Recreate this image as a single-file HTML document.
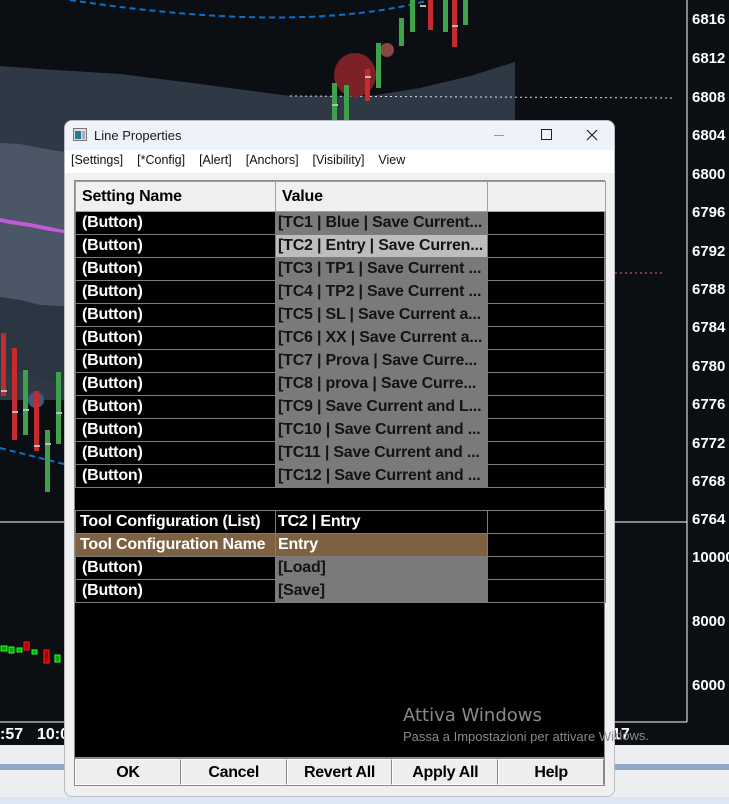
<!DOCTYPE html>
<html><head><meta charset="utf-8"><style>
*{margin:0;padding:0;box-sizing:border-box}
body{width:729px;height:804px;overflow:hidden;background:#0b0e13;position:relative;font-family:"Liberation Sans",Arial,sans-serif}
.abs{position:absolute}
.lbl{position:absolute;left:692px;color:#fff;font-weight:bold;font-size:15px;white-space:nowrap}
.dlg{position:absolute;left:64px;top:120px;width:551px;height:677px;background:#f0f0f0;border-radius:8px;border:1px solid #b9bcc2;overflow:hidden}
.title{height:29px;background:#eef2f9;position:relative;font-size:13px;color:#1a1a1a}
.menu{height:23px;background:#fff;font-size:12.5px;color:#111;padding:3px 0 0 6px}
.menu span{margin-right:14px}
.grid{position:absolute;left:9px;top:59px;width:531px;height:578px;background:#000;border:1px solid #888}
table{border-collapse:collapse;font-size:16px;font-weight:bold;table-layout:fixed;width:530px;letter-spacing:-0.2px}
td{height:23px;border:1px solid #7c7c7c;padding:0 0 0 6px;white-space:nowrap;overflow:hidden;color:#fff}
td.v{background:#7a7a7a;color:#141414;padding-left:2px}
.hdr td{height:30px;background:#f0f0f0;color:#000;border-color:#a0a0a0}
.btns{position:absolute;left:9px;top:637px;width:531px;height:28px;display:flex;border:1px solid #888}
.btns div{flex:1;background:#eeeeee;border:1px solid #fff;border-right:1px solid #888;text-align:center;font-weight:bold;font-size:16px;line-height:26px;color:#000;letter-spacing:-0.3px}
</style></head><body>
<svg class="abs" style="left:0;top:0" width="729" height="804">
<polygon points="0,66 40,69 120,74 200,84 290,96 370,96 420,88 470,76 515,62 515,400 0,400" fill="#2f3946"/>
<polygon points="0,143 20,144 40,148 64,152 64,306 40,305 20,300 0,297" fill="#4b5667"/>
<polygon points="0,297 20,300 40,305 64,307 64,385 40,378 20,372 0,370" fill="#2c3542"/>
<polygon points="0,218 10,220 30,223 50,227 64,230 64,233 50,231 30,227 10,224 0,222" fill="#c05bd9"/>
<path d="M70,0 Q300,35 430,0" stroke="#0b73c9" stroke-width="2" fill="none" stroke-dasharray="6,4"/>
<path d="M0,448 L64,464" stroke="#0b73c9" stroke-width="2" fill="none" stroke-dasharray="6,4"/>
<line x1="290" y1="96" x2="672" y2="98" stroke="#ddd" stroke-dasharray="2,3"/>
<line x1="615" y1="273" x2="662" y2="273" stroke="#e06a7a" stroke-dasharray="2,3"/>
<line x1="0" y1="522" x2="687" y2="522" stroke="#fff"/>
<line x1="687" y1="0" x2="687" y2="722" stroke="#fff"/>
<line x1="0" y1="722" x2="687" y2="722" stroke="#fff"/>
<ellipse cx="355" cy="75" rx="21" ry="22" fill="#7c2226"/>
<circle cx="387" cy="50" r="7" fill="#8a4646"/>
<circle cx="36" cy="400" r="8" fill="#3c5a80"/>
<g fill="#3ea24a"><rect x="332" y="83" width="5" height="40"/><rect x="344" y="85" width="5" height="35"/><rect x="376" y="43" width="5" height="45"/><rect x="399" y="18" width="5" height="28"/><rect x="410" y="0" width="5" height="32"/><rect x="443" y="0" width="5" height="32"/><rect x="463" y="0" width="5" height="25"/><rect x="23" y="370" width="5" height="65"/><rect x="45" y="430" width="5" height="62"/><rect x="56" y="372" width="5" height="72"/></g>
<g fill="#c42a2e"><rect x="365" y="69" width="5" height="32"/><rect x="428" y="0" width="5" height="30"/><rect x="452" y="0" width="5" height="47"/><rect x="1" y="333" width="5" height="63"/><rect x="12" y="348" width="5" height="92"/><rect x="34" y="391" width="5" height="60"/></g>
<g fill="#bbb"><rect x="332" y="104" width="6" height="2"/><rect x="365" y="76" width="6" height="2"/><rect x="1" y="390" width="6" height="2"/><rect x="12" y="411" width="6" height="2"/><rect x="23" y="409" width="6" height="2"/><rect x="34" y="445" width="6" height="2"/><rect x="45" y="443" width="6" height="2"/><rect x="56" y="412" width="6" height="2"/><rect x="420" y="5" width="6" height="2"/><rect x="452" y="25" width="6" height="2"/></g>
<g stroke-width="1"><rect x="1" y="646" width="6" height="5" fill="#0a0" stroke="#3f3"/><rect x="9" y="647" width="5" height="6" fill="#0a0" stroke="#3f3"/><rect x="17" y="648" width="5" height="4" fill="#0a0" stroke="#3f3"/><rect x="32" y="650" width="5" height="4" fill="#0a0" stroke="#3f3"/><rect x="44" y="650" width="5" height="13" fill="#a00" stroke="#f22"/><rect x="55" y="655" width="5" height="7" fill="#0a0" stroke="#3f3"/><rect x="24" y="642" width="5" height="8" fill="#a00" stroke="#f22"/></g>
<rect x="0" y="745" width="729" height="59" fill="#eceeef"/>
<rect x="0" y="764" width="729" height="6" fill="#8ea8c6"/>
<rect x="0" y="797" width="729" height="7" fill="#dde6f3"/>
</svg>
<div class="lbl" style="top:11px">6816</div><div class="lbl" style="top:50px">6812</div><div class="lbl" style="top:89px">6808</div><div class="lbl" style="top:127px">6804</div><div class="lbl" style="top:166px">6800</div><div class="lbl" style="top:204px">6796</div><div class="lbl" style="top:243px">6792</div><div class="lbl" style="top:281px">6788</div><div class="lbl" style="top:319px">6784</div><div class="lbl" style="top:358px">6780</div><div class="lbl" style="top:396px">6776</div><div class="lbl" style="top:435px">6772</div><div class="lbl" style="top:473px">6768</div><div class="lbl" style="top:511px">6764</div><div class="lbl" style="top:549px">10000</div><div class="lbl" style="top:613px">8000</div><div class="lbl" style="top:677px">6000</div>
<div class="lbl" style="left:0;top:726px;font-size:16px">:57</div><div class="lbl" style="left:37px;top:726px;font-size:16px">10:0</div><div class="lbl" style="left:612px;top:726px;font-size:16px">17</div>
<div class="dlg">
<div class="title"><svg class="abs" style="left:8px;top:7px" width="14" height="13"><rect x=".5" y=".5" width="13" height="12" fill="#dde" stroke="#777"/><rect x="2" y="3" width="6" height="8" fill="#2a7a8a"/><rect x="9" y="3" width="3" height="8" fill="#aab"/></svg><span class="abs" style="left:29px;top:7px">Line Properties</span>
<div class="abs" style="left:429px;top:14px;width:10px;height:1px;background:#999"></div>
<div class="abs" style="left:476px;top:8px;width:11px;height:11px;border:1px solid #222"></div>
<svg class="abs" style="left:521px;top:8px" width="12" height="12"><path d="M1,1L11,11M11,1L1,11" stroke="#222" stroke-width="1.2"/></svg></div>
<div class="menu"><span>[Settings]</span><span>[*Config]</span><span>[Alert]</span><span>[Anchors]</span><span>[Visibility]</span><span>View</span></div>
<div class="grid"><table>
<colgroup><col style="width:200px"><col style="width:212px"><col style="width:118px"></colgroup>
<tr class="hdr"><td>Setting Name</td><td>Value</td><td></td></tr>
<tr><td>(Button)</td><td class="v">[TC1 | Blue | Save Current...</td><td></td></tr>
<tr><td>(Button)</td><td class="v" style="background:#bdbdbd">[TC2 | Entry | Save Curren...</td><td></td></tr>
<tr><td>(Button)</td><td class="v">[TC3 | TP1 | Save Current ...</td><td></td></tr>
<tr><td>(Button)</td><td class="v">[TC4 | TP2 | Save Current ...</td><td></td></tr>
<tr><td>(Button)</td><td class="v">[TC5 | SL | Save Current a...</td><td></td></tr>
<tr><td>(Button)</td><td class="v">[TC6 | XX | Save Current a...</td><td></td></tr>
<tr><td>(Button)</td><td class="v">[TC7 | Prova | Save Curre...</td><td></td></tr>
<tr><td>(Button)</td><td class="v">[TC8 | prova | Save Curre...</td><td></td></tr>
<tr><td>(Button)</td><td class="v">[TC9 | Save Current and L...</td><td></td></tr>
<tr><td>(Button)</td><td class="v">[TC10 | Save Current and ...</td><td></td></tr>
<tr><td>(Button)</td><td class="v">[TC11 | Save Current and ...</td><td></td></tr>
<tr><td>(Button)</td><td class="v">[TC12 | Save Current and ...</td><td></td></tr>
<tr><td colspan="3" style="border-left:none;border-right:none"></td></tr>
<tr><td style="padding-left:4px">Tool Configuration (List)</td><td style="padding-left:2px">TC2 | Entry</td><td></td></tr>
<tr><td style="background:#7d6141;padding-left:4px">Tool Configuration Name</td><td style="background:#7d6141;padding-left:2px">Entry</td><td></td></tr>
<tr><td>(Button)</td><td class="v">[Load]</td><td></td></tr>
<tr><td>(Button)</td><td class="v">[Save]</td><td></td></tr>
</table>
<div class="abs" style="left:328px;top:524px;color:#8a8a8a;font-size:18px;font-family:'DejaVu Sans',sans-serif;white-space:nowrap">Attiva Windows</div>
<div class="abs" style="left:328px;top:548px;color:#8a8a8a;font-size:13px;white-space:nowrap">Passa a Impostazioni per attivare Windows.</div>
</div>
<div class="btns"><div>OK</div><div>Cancel</div><div>Revert All</div><div>Apply All</div><div>Help</div></div>
</div>
<div class="abs" style="left:615px;top:728px;color:#8a8a8a;font-size:13px;white-space:nowrap">dows.</div>
</body></html>
